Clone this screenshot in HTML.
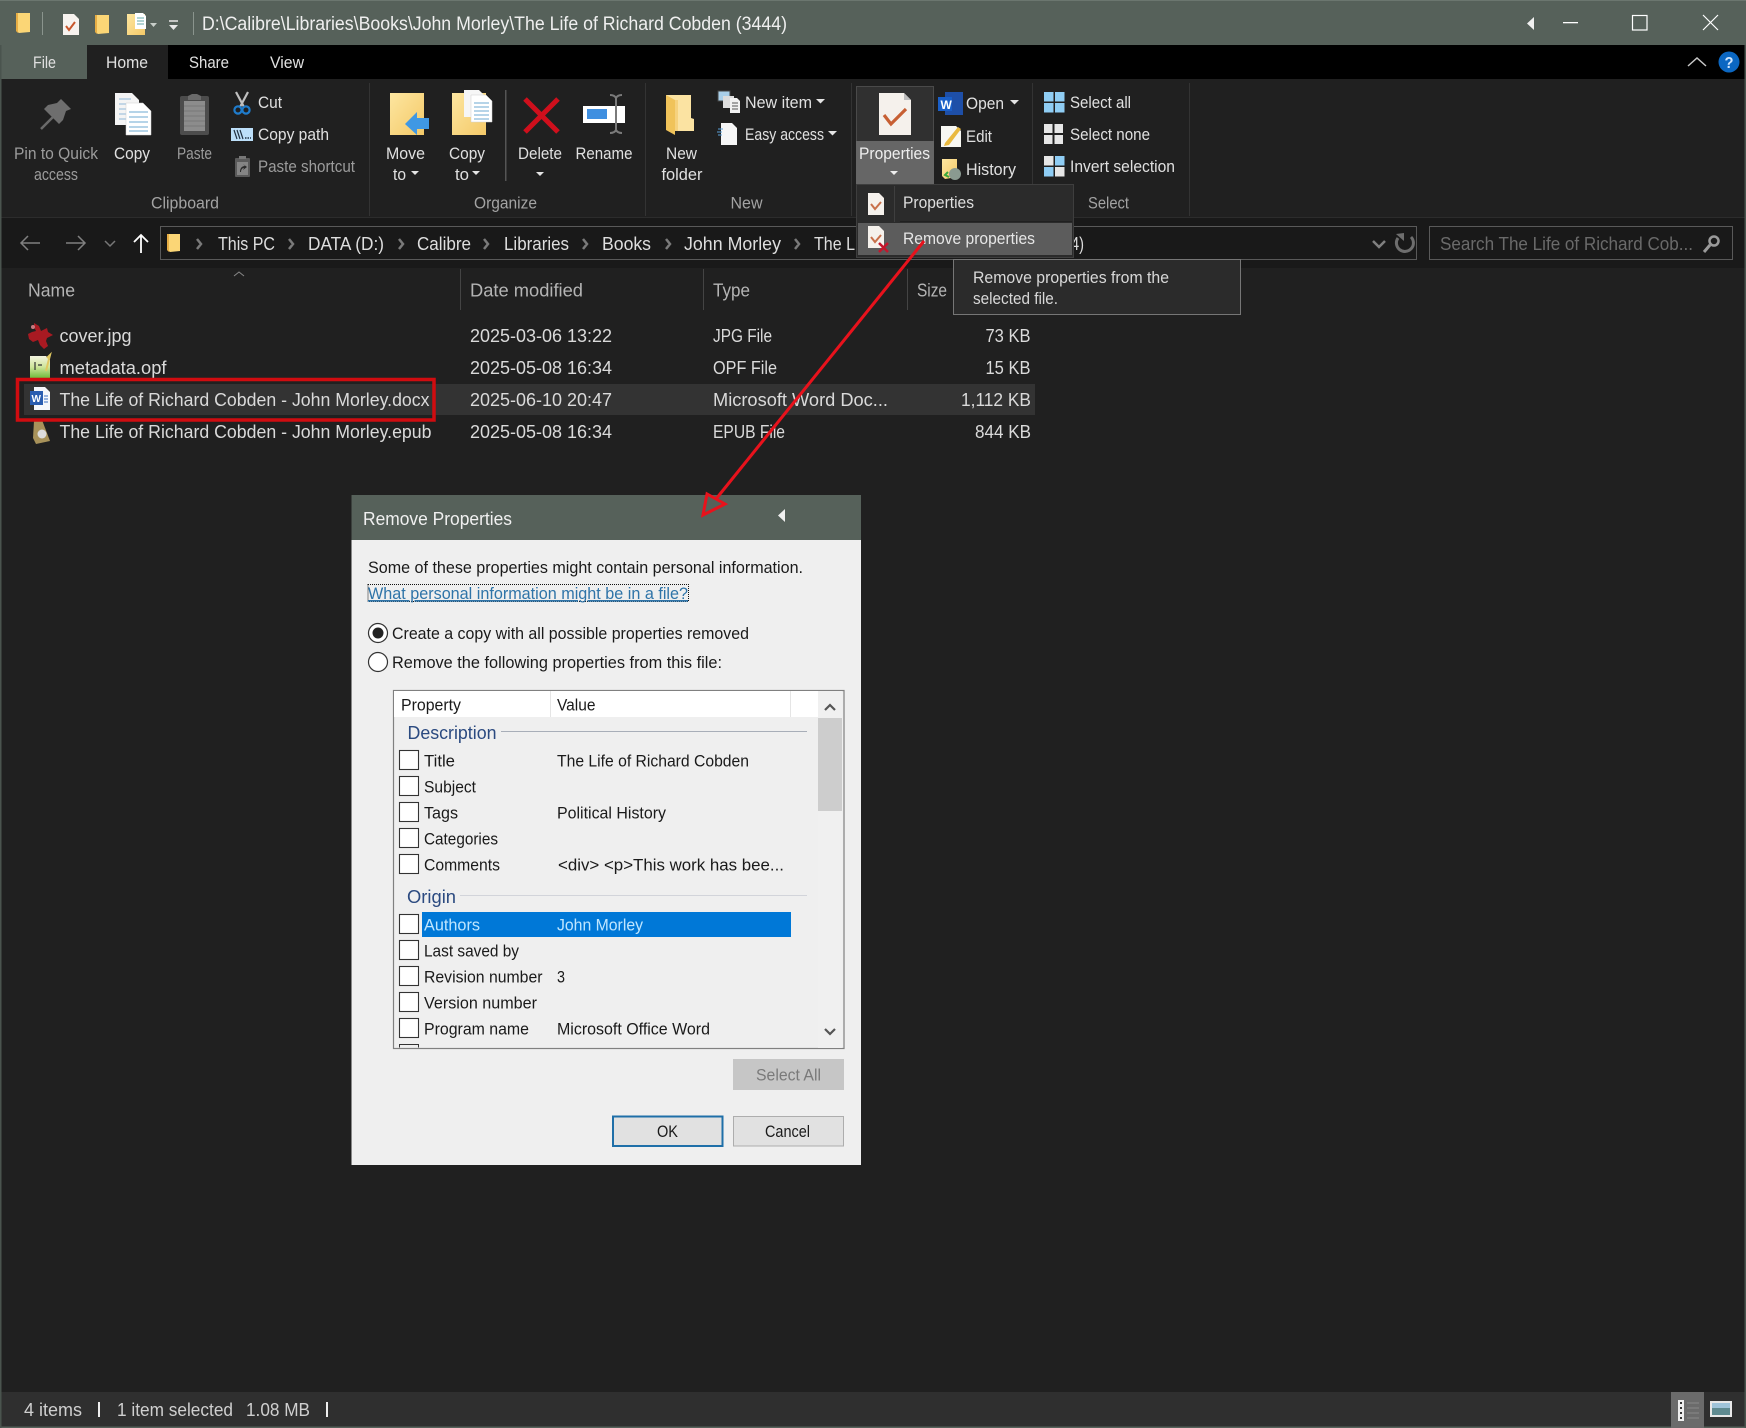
<!DOCTYPE html>
<html lang="en"><head><meta charset="utf-8"><title>Remove Properties</title>
<style>
html,body{margin:0;padding:0;background:#202020}
svg{display:block}
text{font-family:"Liberation Sans",sans-serif;font-size:17px}
.w{fill:#e0e0e0}.g{fill:#9c9c9c}.l{fill:#a3a3a3}.f{fill:#dadada;font-size:18px}.h{fill:#b4b4b4;font-size:18px}
.d{fill:#1a1a1a;font-size:16.8px}.b{fill:#2b4a80;font-size:18px}
.a{fill:#dedede;font-size:18px}
</style></head><body>
<svg xmlns="http://www.w3.org/2000/svg" width="1746" height="1428" viewBox="0 0 1746 1428">
<defs>
<linearGradient id="y" x1="0" y1="0" x2="1" y2="1"><stop offset="0" stop-color="#fde6a0"/><stop offset="1" stop-color="#f4c968"/></linearGradient>
<linearGradient id="m" x1="0" y1="0" x2="0" y2="1"><stop offset="0" stop-color="#f3f3e0"/><stop offset=".5" stop-color="#cfe59a"/><stop offset="1" stop-color="#6fbb3c"/></linearGradient>
</defs>
<rect width="1746" height="1428" fill="#202020"/>
<!-- title bar -->
<rect width="1746" height="45" fill="#56615a"/>
<rect width="1746" height="1" fill="#6b766f"/>
<!-- tabs -->
<rect y="45" width="1746" height="34" fill="#000"/>
<rect y="45" width="87" height="34" fill="#56615a"/>
<rect x="87" y="45" width="81" height="34" fill="#202020"/>
<text class="w" x="33" y="68" textLength="23" lengthAdjust="spacingAndGlyphs">File</text>
<text class="w" x="106" y="68" textLength="42" lengthAdjust="spacingAndGlyphs">Home</text>
<text class="w" x="189" y="68" textLength="40" lengthAdjust="spacingAndGlyphs">Share</text>
<text class="w" x="270" y="68" textLength="34" lengthAdjust="spacingAndGlyphs">View</text>
<!-- quick access -->
<path d="M16 13h14v19l-11 1-3-2z" fill="#fbd676"/><path d="M16 13h2v20l-2-2z" fill="#e7ae45"/>
<rect x="42" y="12" width="1" height="23" fill="#8a948d"/>
<path d="M63 14h11l5 5v16H63z" fill="#f7f3ef"/><path d="M66 26l3 4 6-8" fill="none" stroke="#c8562b" stroke-width="2"/>
<path d="M95 15h14v18l-11 1-3-2z" fill="#fbd676"/><path d="M95 15h2v19l-2-2z" fill="#e7ae45"/>
<path d="M127 14h18v21h-18z" fill="url(#y)"/><path d="M135 13h8l3 3v13h-11z" fill="#fff"/><path d="M137 18h7M137 21h7M137 24h7" stroke="#6aa" stroke-width="1"/>
<path d="M150 23h7l-3.500 4z" fill="#c8cec9"/>
<path d="M169 21h9" stroke="#e8e8e8" stroke-width="1.500"/><path d="M169 25h9l-4.500 5z" fill="#e8e8e8"/>
<rect x="193" y="12" width="1" height="23" fill="#8a948d"/>
<text x="202" y="30" fill="#efefef" style="font-size:19px" textLength="585" lengthAdjust="spacingAndGlyphs">D:\Calibre\Libraries\Books\John Morley\The Life of Richard Cobden (3444)</text>
<!-- window controls -->
<path d="M1534 17v13l-7-6.500z" fill="#f0f0f0"/>
<rect x="1563" y="22" width="15" height="1.300" fill="#fff"/>
<rect x="1632.500" y="15.500" width="14.500" height="14.500" fill="none" stroke="#fff" stroke-width="1.200"/>
<path d="M1703 15l15 15M1718 15l-15 15" stroke="#fff" stroke-width="1.200"/>
<path d="M1688 66l9-8 9 8" fill="none" stroke="#c8c8c8" stroke-width="1.500"/>
<circle cx="1729" cy="62" r="10.500" fill="#0b67c2"/>
<text x="1724.500" y="68" fill="#cfe6ff" style="font-size:16px;font-weight:bold" textLength="9" lengthAdjust="spacingAndGlyphs">?</text>
<!-- ribbon separators -->
<g fill="#333"><rect x="369" y="83" width="1" height="133"/><rect x="645" y="83" width="1" height="133"/><rect x="851" y="83" width="1" height="133"/><rect x="1032" y="83" width="1" height="133"/><rect x="1189" y="83" width="1" height="133"/></g>
<rect x="505" y="90" width="1.500" height="91" fill="#555"/>
<!-- clipboard group -->
<path d="M41 129l12-12" stroke="#6a6a6a" stroke-width="2.500"/>
<path d="M61 99l10 10-5 2-3 9-4 4-15-15 4-4 9-2z" fill="#6e6e6e"/>
<text class="g" x="14" y="159" textLength="84" lengthAdjust="spacingAndGlyphs">Pin to Quick</text>
<text class="g" x="34" y="180" textLength="44" lengthAdjust="spacingAndGlyphs">access</text>
<path d="M115 93h17l7 7v25h-24z" fill="#f4f4f4"/><path d="M119 99h12M119 104h16M119 109h16M119 114h16M119 119h16" stroke="#8fb8d8"/>
<path d="M126 103h17l8 8v24h-25z" fill="#fff" stroke="#d0d0d0" stroke-width=".5"/><path d="M129 112h19M129 117h19M129 122h19M129 127h19M129 131h19" stroke="#6ea9d0"/>
<text class="w" x="114" y="159" textLength="36" lengthAdjust="spacingAndGlyphs">Copy</text>
<rect x="180" y="96" width="29" height="39" rx="2" fill="#4c4c4c"/><rect x="184" y="101" width="21" height="30" fill="#8c8c8c"/>
<path d="M184 106h21M184 111h21M184 116h21M184 121h21M184 126h21" stroke="#777"/>
<path d="M188 96l4-2h5l4 2v4h-13z" fill="#6a6a6a"/>
<text class="g" x="177" y="159" textLength="35" lengthAdjust="spacingAndGlyphs">Paste</text>
<path d="M236 92l8 15M248 92l-8 15" stroke="#bfbfbf" stroke-width="2.200"/>
<circle cx="238" cy="110" r="3.600" fill="none" stroke="#1f7ccc" stroke-width="2.200"/><circle cx="246" cy="110" r="3.600" fill="none" stroke="#1f7ccc" stroke-width="2.200"/>
<text class="w" x="258" y="108" textLength="24" lengthAdjust="spacingAndGlyphs">Cut</text>
<rect x="231" y="128" width="22" height="13" fill="#bcdff9"/><path d="M234 130l3 9M237 130l3 9M240 130l3 9" stroke="#234" stroke-width="1.200"/><path d="M245 138h6" stroke="#234" stroke-dasharray="1.500 1" stroke-width="1.500"/>
<text class="w" x="258" y="140" textLength="71" lengthAdjust="spacingAndGlyphs">Copy path</text>
<rect x="235" y="158" width="15" height="19" rx="1" fill="#5a5a5a"/><rect x="237" y="162" width="11" height="13" fill="#858585"/><path d="M240 172c0-4 2-6 5-6l-2-2 4 3-4 3 1-2c-2 0-3 2-3 4z" fill="#2a2a2a"/><rect x="239" y="156" width="7" height="3" fill="#777"/>
<text class="g" x="258" y="172" textLength="97" lengthAdjust="spacingAndGlyphs">Paste shortcut</text>
<text class="l" x="151" y="208.500" textLength="68" lengthAdjust="spacingAndGlyphs">Clipboard</text>
<!-- organize -->
<rect x="390" y="93" width="34" height="42" fill="url(#y)"/>
<path d="M405 124l12-12v6h12v11h-12v6z" fill="#3f98e4"/>
<text class="w" x="386" y="159" textLength="39" lengthAdjust="spacingAndGlyphs">Move</text>
<text class="w" x="393" y="180" textLength="13" lengthAdjust="spacingAndGlyphs">to</text>
<path d="M411 171h8l-4 4z" fill="#e4e4e4"/>
<rect x="452" y="93" width="34" height="42" fill="url(#y)"/>
<path d="M464 90h15l6 6v21h-21z" fill="#f6f6f6"/>
<path d="M471 95h15l6 6v21h-21z" fill="#fff" stroke="#cfcfcf" stroke-width=".5"/><path d="M474 103h15M474 107h15M474 111h15M474 115h15M474 119h15" stroke="#6ea9d0"/>
<text class="w" x="449" y="159" textLength="36" lengthAdjust="spacingAndGlyphs">Copy</text>
<text class="w" x="455" y="180" textLength="14" lengthAdjust="spacingAndGlyphs">to</text>
<path d="M472 171h8l-4 4z" fill="#e4e4e4"/>
<path d="M525 99l33 33M558 99l-33 33" stroke="#cf0f1c" stroke-width="5"/>
<text class="w" x="518" y="159" textLength="44" lengthAdjust="spacingAndGlyphs">Delete</text>
<path d="M536 172h8l-4 4z" fill="#e4e4e4"/>
<rect x="583" y="106" width="42" height="17" fill="#fff"/><rect x="587" y="109" width="20" height="10" fill="#3f8fe0"/>
<path d="M616 97v35M610 95c3 0 5 1 6 3 1-2 3-3 6-3M610 133c3 0 5-1 6-3 1 2 3 3 6 3" fill="none" stroke="#7a7a7a" stroke-width="2"/>
<text class="w" x="575.500" y="159" textLength="57" lengthAdjust="spacingAndGlyphs">Rename</text>
<text class="l" x="474" y="208.500" textLength="63" lengthAdjust="spacingAndGlyphs">Organize</text>
<!-- new -->
<path d="M666 95h25v23l3 1v12h-20l-1-30-7-2z" fill="#fbe3a2"/><path d="M666 95l9 5v35l-9-5z" fill="#f0c35a"/><path d="M675 100h3v31h-3z" fill="#f6d27e"/>
<text class="w" x="666" y="159" textLength="31" lengthAdjust="spacingAndGlyphs">New</text>
<text class="w" x="661.500" y="180" textLength="41" lengthAdjust="spacingAndGlyphs">folder</text>
<rect x="718" y="91" width="12" height="10" fill="#a9cfe9" stroke="#444"/><rect x="723" y="96" width="11" height="12" fill="#ddd"/><path d="M730 98h7l3 3v12h-10z" fill="#f2f2f2"/><path d="M732 103h6M732 106h6M732 109h6" stroke="#555"/>
<text class="w" x="745" y="108" textLength="67" lengthAdjust="spacingAndGlyphs">New item</text>
<path d="M816 99h9l-4.500 4.500z" fill="#e4e4e4"/>
<path d="M721 123h11l5 5v17h-16z" fill="#f6f6f6"/><path d="M718 129h5M717 132h5M718 135h4" stroke="#5aa0d8"/>
<text class="w" x="745" y="140" textLength="79" lengthAdjust="spacingAndGlyphs">Easy access</text>
<path d="M828 131h9l-4.500 4.500z" fill="#e4e4e4"/>
<text class="l" x="730.500" y="208.500" textLength="32" lengthAdjust="spacingAndGlyphs">New</text>
<!-- open group / properties -->
<rect x="856.500" y="86.500" width="77" height="55" fill="#303030" stroke="#4a4a4a"/>
<rect x="856" y="141" width="78" height="44" fill="#666"/>
<path d="M879 93h25l7 7v35h-32z" fill="#f5f1ec"/><path d="M904 93l7 7h-7z" fill="#bdbdbd"/>
<path d="M884 115l7 9 15-15" fill="none" stroke="#c75f33" stroke-width="3.200"/>
<text fill="#eee" x="859" y="159" textLength="71" lengthAdjust="spacingAndGlyphs">Properties</text>
<path d="M890 171h8l-4 4z" fill="#eee"/>
<rect x="945" y="92" width="18" height="23" fill="#1e4fa8"/><rect x="938" y="97" width="14" height="14" fill="#1a5fc8"/>
<text x="940.500" y="109" fill="#fff" style="font-size:12px;font-weight:bold">W</text>
<text class="w" x="966" y="109" textLength="38" lengthAdjust="spacingAndGlyphs">Open</text>
<path d="M1010 100h9l-4.500 4.500z" fill="#e4e4e4"/>
<path d="M941 126h15l5 5v16h-20z" fill="#f7f7f2"/><path d="M945 143l13-16 3 2-12 16-5 1z" fill="#e9b93f"/>
<text class="w" x="966" y="142" textLength="26" lengthAdjust="spacingAndGlyphs">Edit</text>
<path d="M942 159h15v18l-12 2-3-3z" fill="url(#y)"/><circle cx="955" cy="174" r="6" fill="#8a9a90"/><path d="M948 172l-3 3 4 2" fill="none" stroke="#3aa83a" stroke-width="2"/>
<text class="w" x="966" y="175" textLength="50" lengthAdjust="spacingAndGlyphs">History</text>
<!-- select group -->
<g fill="#8fcdf4"><rect x="1044" y="92" width="9.500" height="9.500"/><rect x="1055" y="92" width="9.500" height="9.500"/><rect x="1044" y="103" width="9.500" height="9.500"/><rect x="1055" y="103" width="9.500" height="9.500"/></g>
<text class="w" x="1070" y="108" textLength="61" lengthAdjust="spacingAndGlyphs">Select all</text>
<g fill="#e6e6e6"><rect x="1044" y="124" width="8.500" height="9"/><rect x="1054.500" y="124" width="8.500" height="9"/><rect x="1044" y="135" width="8.500" height="9"/><rect x="1054.500" y="135" width="8.500" height="9"/></g>
<text class="w" x="1070" y="140" textLength="80" lengthAdjust="spacingAndGlyphs">Select none</text>
<rect x="1044" y="156" width="9.500" height="9.500" fill="#e6e6e6"/><rect x="1055" y="156" width="9.500" height="9.500" fill="#8fcdf4"/><rect x="1044" y="167" width="9.500" height="9.500" fill="#8fcdf4"/><rect x="1055" y="167" width="9.500" height="9.500" fill="#e6e6e6"/>
<text class="w" x="1070" y="172" textLength="105" lengthAdjust="spacingAndGlyphs">Invert selection</text>
<text class="l" x="1088" y="208.500" textLength="41" lengthAdjust="spacingAndGlyphs">Select</text>
<!-- address row -->
<rect y="218" width="1746" height="50" fill="#191919"/>
<rect y="217" width="1746" height="1" fill="#2c2c2c"/>
<path d="M40 243H21M28 236l-7 7 7 7" fill="none" stroke="#808080" stroke-width="1.500"/>
<path d="M66 243h19M78 236l7 7-7 7" fill="none" stroke="#808080" stroke-width="1.500"/>
<path d="M105 241l5 5 5-5" fill="none" stroke="#777" stroke-width="1.500"/>
<path d="M141 253v-18M134 242l7-7 7 7" fill="none" stroke="#fff" stroke-width="1.800"/>
<rect x="160.500" y="226.500" width="1256" height="33" fill="#191919" stroke="#595959"/>
<rect x="1429.500" y="226.500" width="303" height="33" fill="#191919" stroke="#595959"/>
<path d="M167 234h13v17l-10 1-3-2z" fill="#fbd676"/><path d="M167 234h2v18l-2-2z" fill="#e7ae45"/>
<g fill="none" stroke="#7a7a7a" stroke-width="2.500"><path d="M197 239l4 5-4 5M289 239l4 5-4 5M399 239l4 5-4 5M484 239l4 5-4 5M583 239l4 5-4 5M666 239l4 5-4 5M795 239l4 5-4 5"/></g>
<text class="a" x="218" y="250" textLength="57" lengthAdjust="spacingAndGlyphs">This PC</text>
<text class="a" x="308" y="250" textLength="76" lengthAdjust="spacingAndGlyphs">DATA (D:)</text>
<text class="a" x="417" y="250" textLength="54" lengthAdjust="spacingAndGlyphs">Calibre</text>
<text class="a" x="504" y="250" textLength="65" lengthAdjust="spacingAndGlyphs">Libraries</text>
<text class="a" x="602" y="250" textLength="49" lengthAdjust="spacingAndGlyphs">Books</text>
<text class="a" x="684" y="250" textLength="97" lengthAdjust="spacingAndGlyphs">John Morley</text>
<text class="a" x="814" y="250" textLength="41" lengthAdjust="spacingAndGlyphs">The L</text>
<text class="a" x="1071" y="250" textLength="13" lengthAdjust="spacingAndGlyphs">4)</text>
<path d="M1373 241l6 6 6-6" fill="none" stroke="#808080" stroke-width="2.500"/>
<path d="M1398 238a8.500 8.500 0 1 0 13-1" fill="none" stroke="#6e6e6e" stroke-width="3"/><path d="M1396 234l8-1 0 8z" fill="#6e6e6e"/>
<text x="1440" y="250" fill="#6a6a6a" style="font-size:18px" textLength="253" lengthAdjust="spacingAndGlyphs">Search The Life of Richard Cob...</text>
<circle cx="1714" cy="241" r="4.500" fill="none" stroke="#9a9a9a" stroke-width="2.500"/><path d="M1710 245l-6 7" stroke="#9a9a9a" stroke-width="3"/>
<!-- tooltip & menu -->
<rect x="953.500" y="259.500" width="287" height="55" fill="#2b2b2b" stroke="#767676"/>
<text fill="#d8d8d8" x="973" y="283" textLength="196" lengthAdjust="spacingAndGlyphs">Remove properties from the</text>
<text fill="#d8d8d8" x="973" y="304" textLength="85" lengthAdjust="spacingAndGlyphs">selected file.</text>
<!-- list header -->
<g fill="#444"><rect x="460" y="269" width="1" height="41"/><rect x="703" y="269" width="1" height="41"/><rect x="907" y="269" width="1" height="41"/></g>
<path d="M234 276l5-4 5 4" fill="none" stroke="#888" stroke-width="1"/>
<text class="h" x="28" y="296.500" textLength="47" lengthAdjust="spacingAndGlyphs">Name</text>
<text class="h" x="470" y="296.500" textLength="113" lengthAdjust="spacingAndGlyphs">Date modified</text>
<text class="h" x="713" y="296.500" textLength="37" lengthAdjust="spacingAndGlyphs">Type</text>
<text class="h" x="917" y="296.500" textLength="30" lengthAdjust="spacingAndGlyphs">Size</text>
<!-- rows -->
<rect x="24" y="384" width="1011" height="31" fill="#333"/>
<path d="M34 323l5 3 2 5 6-3 1 4 5 3-6 3-1 3 2 5-4 3-4-4-2-5-5 2-4-3-1-5 4-2 4-1-2-4z" fill="#a81a22"/><circle cx="33" cy="327" r="2" fill="#c87a80"/>
<path d="M30 356h16l4 4v18H30z" fill="url(#m)"/><path d="M47 358l3-3-4 16" stroke="#e0c860" stroke-width="2" fill="none"/><path d="M35 362v8M38 365h4" stroke="#333" stroke-width="1.200"/>
<path d="M34 387h11l5 5v18H34z" fill="#f5f7fb"/><rect x="30" y="391" width="13" height="14" fill="#2a5db0"/><text x="31.500" y="402" fill="#fff" style="font-size:10px;font-weight:bold">W</text><path d="M44 396h4M44 399h4M44 402h4" stroke="#3a6fc0"/>
<path d="M34 421l8-1 8 21-14 3-3-6z" fill="#a8925a"/><circle cx="42" cy="434" r="4.500" fill="#ddd"/>
<text class="f" x="59.500" y="342" textLength="72" lengthAdjust="spacingAndGlyphs">cover.jpg</text>
<text class="f" x="59.500" y="374" textLength="107" lengthAdjust="spacingAndGlyphs">metadata.opf</text>
<text class="f" x="59.500" y="406" textLength="370" lengthAdjust="spacingAndGlyphs">The Life of Richard Cobden - John Morley.docx</text>
<text class="f" x="59.500" y="438" textLength="372" lengthAdjust="spacingAndGlyphs">The Life of Richard Cobden - John Morley.epub</text>
<g>
<text class="f" x="470" y="342" textLength="142" lengthAdjust="spacingAndGlyphs">2025-03-06 13:22</text>
<text class="f" x="470" y="374" textLength="142" lengthAdjust="spacingAndGlyphs">2025-05-08 16:34</text>
<text class="f" x="470" y="406" textLength="142" lengthAdjust="spacingAndGlyphs">2025-06-10 20:47</text>
<text class="f" x="470" y="438" textLength="142" lengthAdjust="spacingAndGlyphs">2025-05-08 16:34</text>
<text class="f" x="713" y="342" textLength="59" lengthAdjust="spacingAndGlyphs">JPG File</text>
<text class="f" x="713" y="374" textLength="64" lengthAdjust="spacingAndGlyphs">OPF File</text>
<text class="f" x="713" y="406" textLength="175" lengthAdjust="spacingAndGlyphs">Microsoft Word Doc...</text>
<text class="f" x="713" y="438" textLength="72" lengthAdjust="spacingAndGlyphs">EPUB File</text>
<text class="f" x="985.500" y="342" textLength="45" lengthAdjust="spacingAndGlyphs">73 KB</text>
<text class="f" x="985.500" y="374" textLength="45" lengthAdjust="spacingAndGlyphs">15 KB</text>
<text class="f" x="961" y="406" textLength="70" lengthAdjust="spacingAndGlyphs">1,112 KB</text>
<text class="f" x="975" y="438" textLength="56" lengthAdjust="spacingAndGlyphs">844 KB</text>
</g>
<!-- dropdown menu -->
<rect x="856.500" y="184.500" width="217" height="73" fill="#2b2b2b" stroke="#3e3e3e"/>
<rect x="894" y="186" width="1" height="36" fill="#3f3f3f"/>
<rect x="900" y="221" width="172" height="1" fill="#202020"/>
<rect x="858" y="223" width="214" height="32" fill="#5c5c5c"/>
<path d="M868 193h11l5 5v17h-16z" fill="#f5f1ec"/><path d="M871 204l4 5 6-7" fill="none" stroke="#c8704a" stroke-width="2"/>
<text fill="#dedede" x="903" y="208" textLength="71" lengthAdjust="spacingAndGlyphs">Properties</text>
<path d="M868 226h11l5 5v17h-16z" fill="#f5f1ec"/><path d="M871 237l4 5 6-7" fill="none" stroke="#c8704a" stroke-width="2"/>
<path d="M879 243l9 9M888 243l-9 9" stroke="#c4162c" stroke-width="2.500"/>
<text fill="#e6e6e6" x="903" y="244" textLength="132" lengthAdjust="spacingAndGlyphs">Remove properties</text>
<!-- dialog -->
<rect x="351.500" y="495" width="509.500" height="670" fill="#efefef"/>
<rect x="351.500" y="495" width="509.500" height="45" fill="#56615a"/>
<text fill="#f0f0f0" x="363" y="525" style="font-size:18px" textLength="149" lengthAdjust="spacingAndGlyphs">Remove Properties</text>
<path d="M785 509v13l-7-6.500z" fill="#f0f0f0"/>
<text class="d" x="368" y="573" textLength="435" lengthAdjust="spacingAndGlyphs">Some of these properties might contain personal information.</text>
<rect x="368" y="584.500" width="320.500" height="17" fill="none" stroke="#111" stroke-dasharray="1 1"/>
<text x="368" y="599" style="font-size:16.800px;text-decoration:underline" fill="#2f74a8" textLength="320" lengthAdjust="spacingAndGlyphs">What personal information might be in a file?</text>
<circle cx="378" cy="633" r="9.500" fill="#fff" stroke="#333" stroke-width="1.200"/><circle cx="378" cy="633" r="5.500" fill="#222"/>
<text class="d" x="392" y="639" textLength="357" lengthAdjust="spacingAndGlyphs">Create a copy with all possible properties removed</text>
<circle cx="378" cy="662" r="9.500" fill="#fff" stroke="#333" stroke-width="1.200"/>
<text class="d" x="392" y="668" textLength="330" lengthAdjust="spacingAndGlyphs">Remove the following properties from this file:</text>
<!-- listview -->
<rect x="393.500" y="690.500" width="450.500" height="358" fill="#efefef" stroke="#808080" stroke-width="1.200"/>
<rect x="394" y="691" width="424" height="26" fill="#fff"/>
<rect x="550" y="691" width="1" height="26" fill="#e5e5e5"/><rect x="790" y="691" width="1" height="26" fill="#e5e5e5"/>
<text class="d" x="401" y="710.500" textLength="60" lengthAdjust="spacingAndGlyphs">Property</text>
<text class="d" x="557" y="710.500" textLength="38.500" lengthAdjust="spacingAndGlyphs">Value</text>
<rect x="818" y="691" width="24" height="357" fill="#f0f0f0"/>
<rect x="818" y="718" width="24" height="93" fill="#cdcdcd"/>
<path d="M825 710l5-5 5 5" fill="none" stroke="#555" stroke-width="2.200"/>
<path d="M825 1029l5 5 5-5" fill="none" stroke="#555" stroke-width="2.200"/>
<text class="b" x="407.500" y="739" textLength="89" lengthAdjust="spacingAndGlyphs">Description</text>
<rect x="501" y="731" width="306" height="1" fill="#a8aeb8"/>
<text class="b" x="407" y="903" textLength="49" lengthAdjust="spacingAndGlyphs">Origin</text>
<rect x="460" y="895" width="347" height="1" fill="#d2d4da"/>
<g fill="#fff" stroke="#333" stroke-width="1.100">
<rect x="399.500" y="750.500" width="19" height="19"/><rect x="399.500" y="776.500" width="19" height="19"/><rect x="399.500" y="802.500" width="19" height="19"/><rect x="399.500" y="828.500" width="19" height="19"/><rect x="399.500" y="854.500" width="19" height="19"/>
<rect x="399.500" y="914.500" width="19" height="19"/><rect x="399.500" y="940.500" width="19" height="19"/><rect x="399.500" y="966.500" width="19" height="19"/><rect x="399.500" y="992.500" width="19" height="19"/><rect x="399.500" y="1018.500" width="19" height="19"/>
</g>
<path d="M399.500 1047.500v-3h19v3" fill="none" stroke="#333"/>
<text class="d" x="424" y="766.500" textLength="31" lengthAdjust="spacingAndGlyphs">Title</text>
<text class="d" x="557" y="766.500" textLength="192" lengthAdjust="spacingAndGlyphs">The Life of Richard Cobden</text>
<text class="d" x="424" y="792.500" textLength="52" lengthAdjust="spacingAndGlyphs">Subject</text>
<text class="d" x="424" y="818.500" textLength="34" lengthAdjust="spacingAndGlyphs">Tags</text>
<text class="d" x="557" y="818.500" textLength="109" lengthAdjust="spacingAndGlyphs">Political History</text>
<text class="d" x="424" y="844.500" textLength="74" lengthAdjust="spacingAndGlyphs">Categories</text>
<text class="d" x="424" y="870.500" textLength="76" lengthAdjust="spacingAndGlyphs">Comments</text>
<text class="d" x="558" y="870.500" textLength="226" lengthAdjust="spacingAndGlyphs">&lt;div&gt; &lt;p&gt;This work has bee...</text>
<rect x="422" y="912" width="369" height="25" fill="#0078d7"/>
<text x="424" y="930.500" style="font-size:16.800px" fill="#bfe6ff" textLength="56" lengthAdjust="spacingAndGlyphs">Authors</text>
<text x="557" y="930.500" style="font-size:16.800px" fill="#bfe6ff" textLength="86" lengthAdjust="spacingAndGlyphs">John Morley</text>
<text class="d" x="424" y="956.500" textLength="95" lengthAdjust="spacingAndGlyphs">Last saved by</text>
<text class="d" x="424" y="982.500" textLength="118.500" lengthAdjust="spacingAndGlyphs">Revision number</text>
<text class="d" x="557" y="982.500" textLength="8" lengthAdjust="spacingAndGlyphs">3</text>
<text class="d" x="424" y="1008.500" textLength="113" lengthAdjust="spacingAndGlyphs">Version number</text>
<text class="d" x="424" y="1034.500" textLength="105" lengthAdjust="spacingAndGlyphs">Program name</text>
<text class="d" x="557" y="1034.500" textLength="153" lengthAdjust="spacingAndGlyphs">Microsoft Office Word</text>
<!-- buttons -->
<rect x="733" y="1059" width="111" height="31" fill="#c6c6c6"/>
<text x="756" y="1080.500" style="font-size:16.800px" fill="#7a7a7a" textLength="65" lengthAdjust="spacingAndGlyphs">Select All</text>
<rect x="613" y="1116.500" width="109.500" height="29.500" fill="#e1e1e1" stroke="#1f6fa8" stroke-width="2"/>
<text class="d" x="657" y="1137" textLength="21" lengthAdjust="spacingAndGlyphs">OK</text>
<rect x="733.500" y="1116.500" width="110" height="29.500" fill="#e1e1e1" stroke="#adadad"/>
<text class="d" x="765" y="1137" textLength="45" lengthAdjust="spacingAndGlyphs">Cancel</text>
<!-- status bar -->
<rect y="1392" width="1746" height="36" fill="#2f2f2f"/>
<rect y="1426.500" width="1746" height="1.500" fill="#56615a"/>
<text class="f" style="fill:#cfcfcf" x="24" y="1416" textLength="58" lengthAdjust="spacingAndGlyphs">4 items</text>
<rect x="98" y="1402" width="2" height="15" fill="#eee"/>
<text class="f" style="fill:#cfcfcf" x="117" y="1416" textLength="116" lengthAdjust="spacingAndGlyphs">1 item selected</text>
<text class="f" style="fill:#cfcfcf" x="246" y="1416" textLength="64" lengthAdjust="spacingAndGlyphs">1.08 MB</text>
<rect x="326" y="1402" width="2" height="15" fill="#eee"/>
<rect x="1671" y="1392" width="33" height="36" fill="#6b6b6b"/>
<rect x="1678" y="1400" width="6" height="21" fill="#eee"/><path d="M1680 1402h2v2h-2zM1680 1407h2v2h-2zM1680 1412h2v2h-2zM1680 1417h2v2h-2z" fill="#333"/>
<path d="M1687 1403h12M1687 1408h12M1687 1413h12M1687 1418h12" stroke="#888"/>
<rect x="1710" y="1401" width="22" height="16" fill="#e8e8e8"/><rect x="1712" y="1403" width="18" height="12" fill="#5f8a90"/><rect x="1712" y="1403" width="18" height="5" fill="#9fc4da"/>
<!-- red annotation -->
<rect x="17.500" y="379.500" width="416.500" height="40.500" fill="none" stroke="#d00c10" stroke-width="3.500"/>
<path d="M924 241L716 499" fill="none" stroke="#e8121c" stroke-width="3"/>
<path d="M703 515l4-21 18 10z" fill="none" stroke="#e8121c" stroke-width="3"/>
<!-- window edges -->
<rect y="45" width="1.500" height="1383" fill="#4a544e"/>
<rect x="1744.500" y="45" width="1.500" height="1383" fill="#4a544e"/>
</svg>
</body></html>
